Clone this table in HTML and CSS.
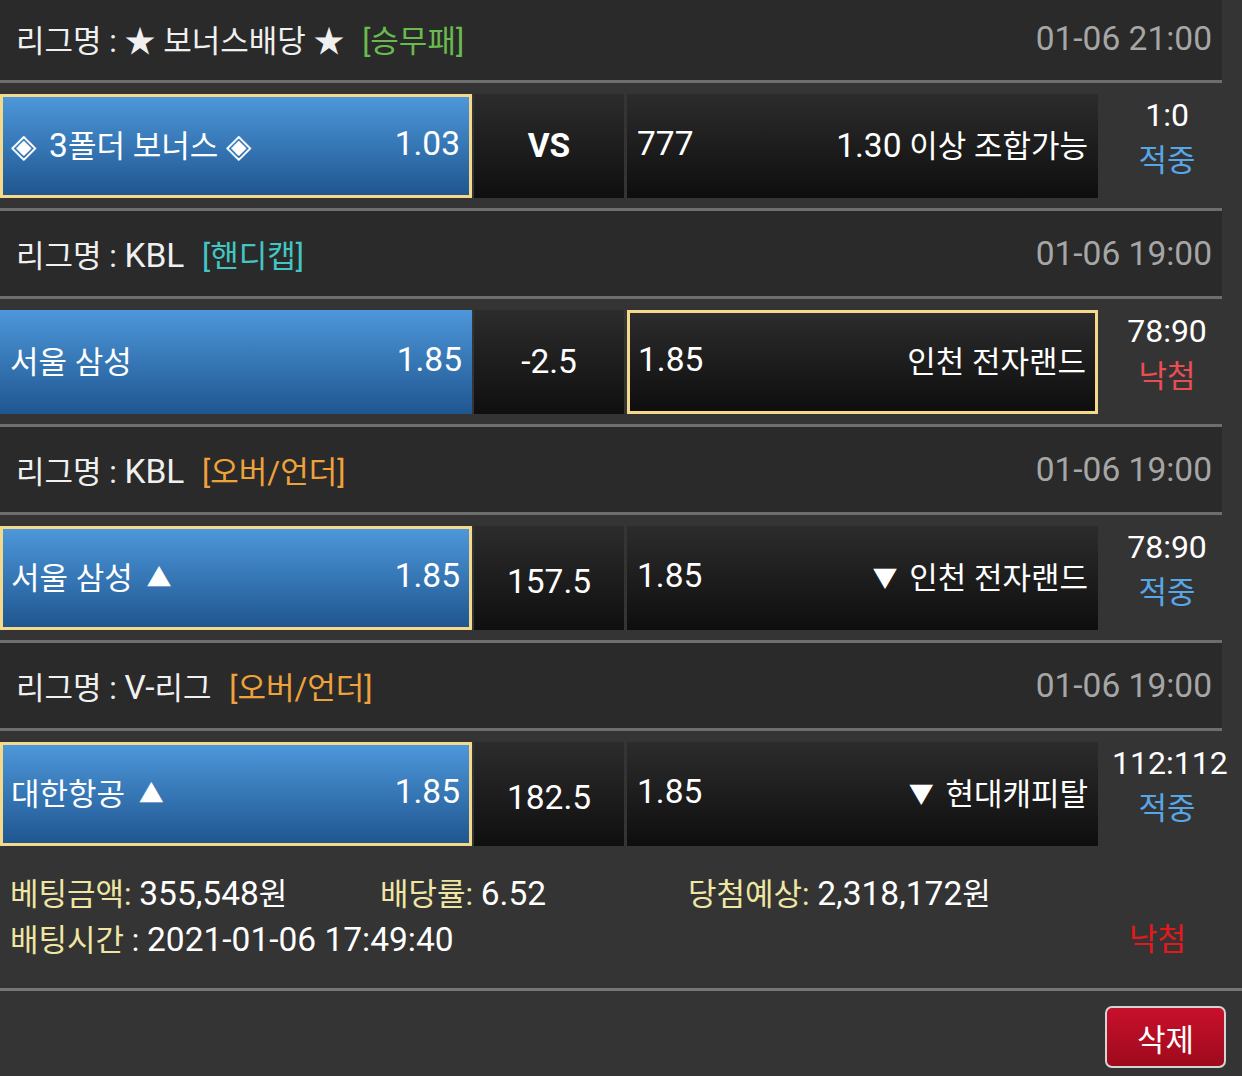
FILE: index.html
```html
<!DOCTYPE html>
<html lang="ko">
<head>
<meta charset="utf-8">
<link rel="stylesheet" href="styles.css">
</head>
<body>
<div class="list">
  <div class="league first">
    <span class="lname">리그명 : ★ 보너스배당 ★ <span class="tag green">[승무패]</span></span>
    <span class="date n">01-06 21:00</span>
  </div>
  <div class="match">
    <div class="cell home sel"><span><span class="dia">◈</span> <span class="n">3</span>폴더 보너스 <span class="dia">◈</span></span><span class="n">1.03</span></div>
    <div class="cell mid"><b class="n">VS</b></div>
    <div class="cell away"><span class="n">777</span><span><span class="n">1.30</span> 이상 조합가능</span></div>
    <div class="result"><div class="n">1:0</div><div class="hit">적중</div></div>
  </div>

  <div class="league">
    <span class="lname">리그명 : <span class="n">KBL</span> <span class="tag cyan">[핸디캡]</span></span>
    <span class="date n">01-06 19:00</span>
  </div>
  <div class="match">
    <div class="cell home"><span>서울 삼성</span><span class="n">1.85</span></div>
    <div class="cell mid"><span class="n">-2.5</span></div>
    <div class="cell away sel"><span class="n">1.85</span><span>인천 전자랜드</span></div>
    <div class="result"><div class="n">78:90</div><div class="miss">낙첨</div></div>
  </div>

  <div class="league">
    <span class="lname">리그명 : <span class="n">KBL</span> <span class="tag orange">[오버/언더]</span></span>
    <span class="date n">01-06 19:00</span>
  </div>
  <div class="match">
    <div class="cell home sel"><span>서울 삼성 <span class="tri up">▲</span></span><span class="n">1.85</span></div>
    <div class="cell mid low"><span class="n">157.5</span></div>
    <div class="cell away"><span class="n">1.85</span><span><span class="tri down">▼</span> 인천 전자랜드</span></div>
    <div class="result"><div class="n">78:90</div><div class="hit">적중</div></div>
  </div>

  <div class="league">
    <span class="lname">리그명 : <span class="n">V-</span>리그 <span class="tag orange">[오버/언더]</span></span>
    <span class="date n">01-06 19:00</span>
  </div>
  <div class="match last">
    <div class="cell home sel"><span>대한항공 <span class="tri up">▲</span></span><span class="n">1.85</span></div>
    <div class="cell mid low"><span class="n">182.5</span></div>
    <div class="cell away"><span class="n">1.85</span><span><span class="tri down">▼</span> 현대캐피탈</span></div>
    <div class="result"><div class="n">112:112</div><div class="hit">적중</div></div>
  </div>
</div>

<div class="summary">
  <div class="sumrow">
    <span class="item c1"><span class="lbl">베팅금액:</span> <span class="n">355,548</span>원</span>
    <span class="item c2"><span class="lbl">배당률:</span> <span class="n">6.52</span></span>
    <span class="item c3"><span class="lbl">당첨예상:</span> <span class="n">2,318,172</span>원</span>
  </div>
  <div class="sumrow two">
    <span class="item"><span class="lbl">배팅시간</span> : <span class="n">2021-01-06 17:49:40</span></span>
    <span class="status">낙첨</span>
  </div>
</div>

<div class="footer">
  <button class="del">삭제</button>
</div>
</body>
</html>
```

FILE: styles.css
```css
* {
  box-sizing: border-box;
}

html, body {
  margin: 0;
  padding: 0;
}

body {
  width: 1242px;
  height: 1076px;
  overflow: hidden;
  background: #343434;
  color: #ffffff;
  font-family: Roboto, "Noto Sans CJK KR", "DejaVu Sans", sans-serif;
  font-size: 31px;
}

.n {
  font-size: 33.5px;
}

.dia {
  font-size: 33px;
  margin-right: 3px;
}

.dia + .n {
  margin-left: 2px;
}

.tri {
  font-size: 25px;
  vertical-align: 2px;
}

.tri.up {
  margin-left: 6px;
}

.tri.down {
  margin-right: 4px;
}

.list {
  width: 1222px;
}

.league {
  height: 88px;
  background: #2a2a2a;
  border-bottom: 3px solid #6e6e6e;
  display: flex;
  align-items: center;
  justify-content: space-between;
  padding: 0 10px 0 16px;
}

.league.first {
  height: 83px;
  padding-bottom: 4px;
}

.lname {
  color: #f0f0f0;
}

.tag {
  margin-left: 10px;
}

.green { color: #69bb4e; }
.cyan { color: #42c6c4; }
.orange { color: #f0a23a; }

.date {
  color: #a6a6a6;
}

.match {
  height: 128px;
  padding: 11px 0 10px;
  border-bottom: 3px solid #6e6e6e;
  display: flex;
}

.match.last {
  height: 125px;
  border-bottom: none;
}

.cell {
  flex-shrink: 0;
  height: 104px;
  display: flex;
  align-items: center;
  justify-content: space-between;
  padding: 0 10px 6px;
}

.home {
  width: 472px;
  background: linear-gradient(#4d97da, #1f5690);
}

.mid {
  width: 150px;
  margin-left: 2px;
  justify-content: center;
  padding-bottom: 2px;
  background: linear-gradient(#2c2c2c, #0f0f0f);
}

.mid b {
  font-weight: 700;
}

.mid.low {
  padding-top: 6px;
  padding-bottom: 0;
}

.away {
  width: 471px;
  margin-left: 3px;
  background: linear-gradient(#2c2c2c, #0e0e0e);
}

.sel {
  border: 3px solid #f4d98a;
  padding: 0 9px 6px 8px;
}

.result {
  flex-shrink: 0;
  width: 124px;
  padding-left: 14px;
  margin-top: -2px;
  text-align: center;
  line-height: 46px;
  white-space: nowrap;
}

.result .n {
  font-size: 32px;
}

.hit { color: #58a6e6; }
.miss { color: #e84e52; }

.summary {
  height: 135px;
  padding: 15px 56px 0 10px;
  border-bottom: 3px solid #767676;
  line-height: 45px;
}

.sumrow {
  display: flex;
}

.sumrow.two {
  justify-content: space-between;
}

.lbl {
  color: #efe6a4;
}

.c1 { width: 370px; }
.c2 { width: 308px; }

.status {
  color: #e4191c;
}

.footer {
  display: flex;
  justify-content: flex-end;
  padding: 15px 16px 0 0;
}

.del {
  width: 121px;
  height: 62px;
  border: 2px solid #d4d4d4;
  border-radius: 7px;
  background: linear-gradient(#c8102c, #9e0a1c);
  color: #ffffff;
  font-family: Roboto, "Noto Sans CJK KR", sans-serif;
  font-size: 31px;
  padding: 0;
}
```
